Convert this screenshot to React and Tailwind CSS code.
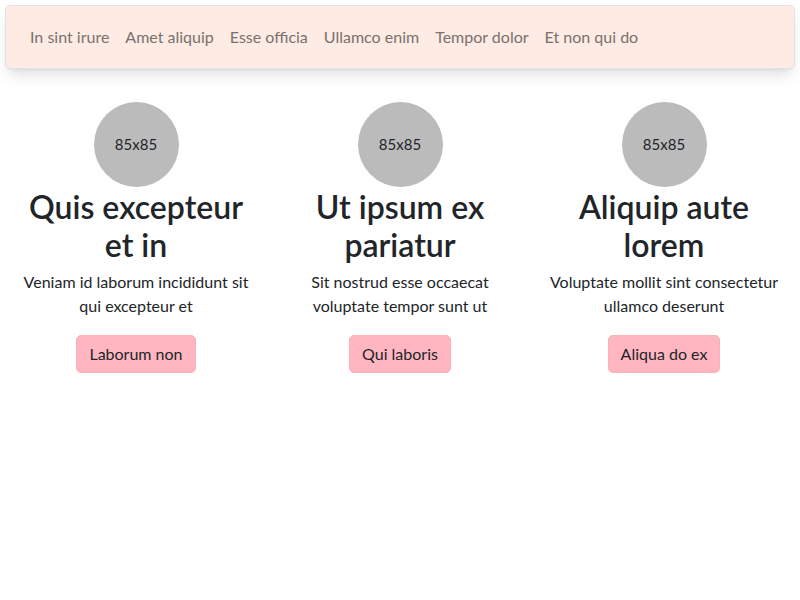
import React from "react";

const LINKS = [
  "In sint irure",
  "Amet aliquip",
  "Esse officia",
  "Ullamco enim",
  "Tempor dolor",
  "Et non qui do",
];

const ITEMS = [
  {
    title: "Quis excepteur et in",
    text: "Veniam id laborum incididunt sit qui excepteur et",
    cta: "Laborum non",
  },
  {
    title: "Ut ipsum ex pariatur",
    text: "Sit nostrud esse occaecat voluptate tempor sunt ut",
    cta: "Qui laboris",
  },
  {
    title: "Aliquip aute lorem",
    text: "Voluptate mollit sint consectetur ullamco deserunt",
    cta: "Aliqua do ex",
  },
];

function Feature({ title, text, cta }) {
  return (
    <div className="flex flex-col items-center px-3 text-center">
      <div className="grid h-[85px] w-[85px] place-items-center rounded-full bg-[#bbbbbb] text-[15px] text-[#212529]">
        85x85
      </div>
      <h2 className="mb-[5px] pt-[1px] text-[32px] font-semibold leading-[1.2] text-[#212529]">
        {title}
      </h2>
      <p className="mb-[17px] text-base leading-6 text-[#212529]">{text}</p>
      <button className="rounded-[5px] border border-[#fcb1bb] bg-[#ffb6c1] px-3 py-1.5 text-base leading-6 text-[#212529]">
        {cta}
      </button>
    </div>
  );
}

export default function App() {
  return (
    <div
      className="min-h-[600px] bg-white pt-[5px]"
      style={{ fontFamily: '"Lato", "Open Sans", sans-serif' }}
    >
      <nav className="mx-[5px] flex h-[64px] items-center rounded-[5px] border border-[#dfe3ea] bg-[#fdebe4] px-4 shadow-lg">
        <ul className="flex">
          {LINKS.map((l) => (
            <li key={l}>
              <a href="#" className="block px-2 py-2 text-base leading-6 text-[#7a716d]">
                {l}
              </a>
            </li>
          ))}
        </ul>
      </nav>

      <section className="mt-[33px] grid grid-cols-3 px-1">
        {ITEMS.map((it) => (
          <Feature key={it.title} {...it} />
        ))}
      </section>
    </div>
  );
}
